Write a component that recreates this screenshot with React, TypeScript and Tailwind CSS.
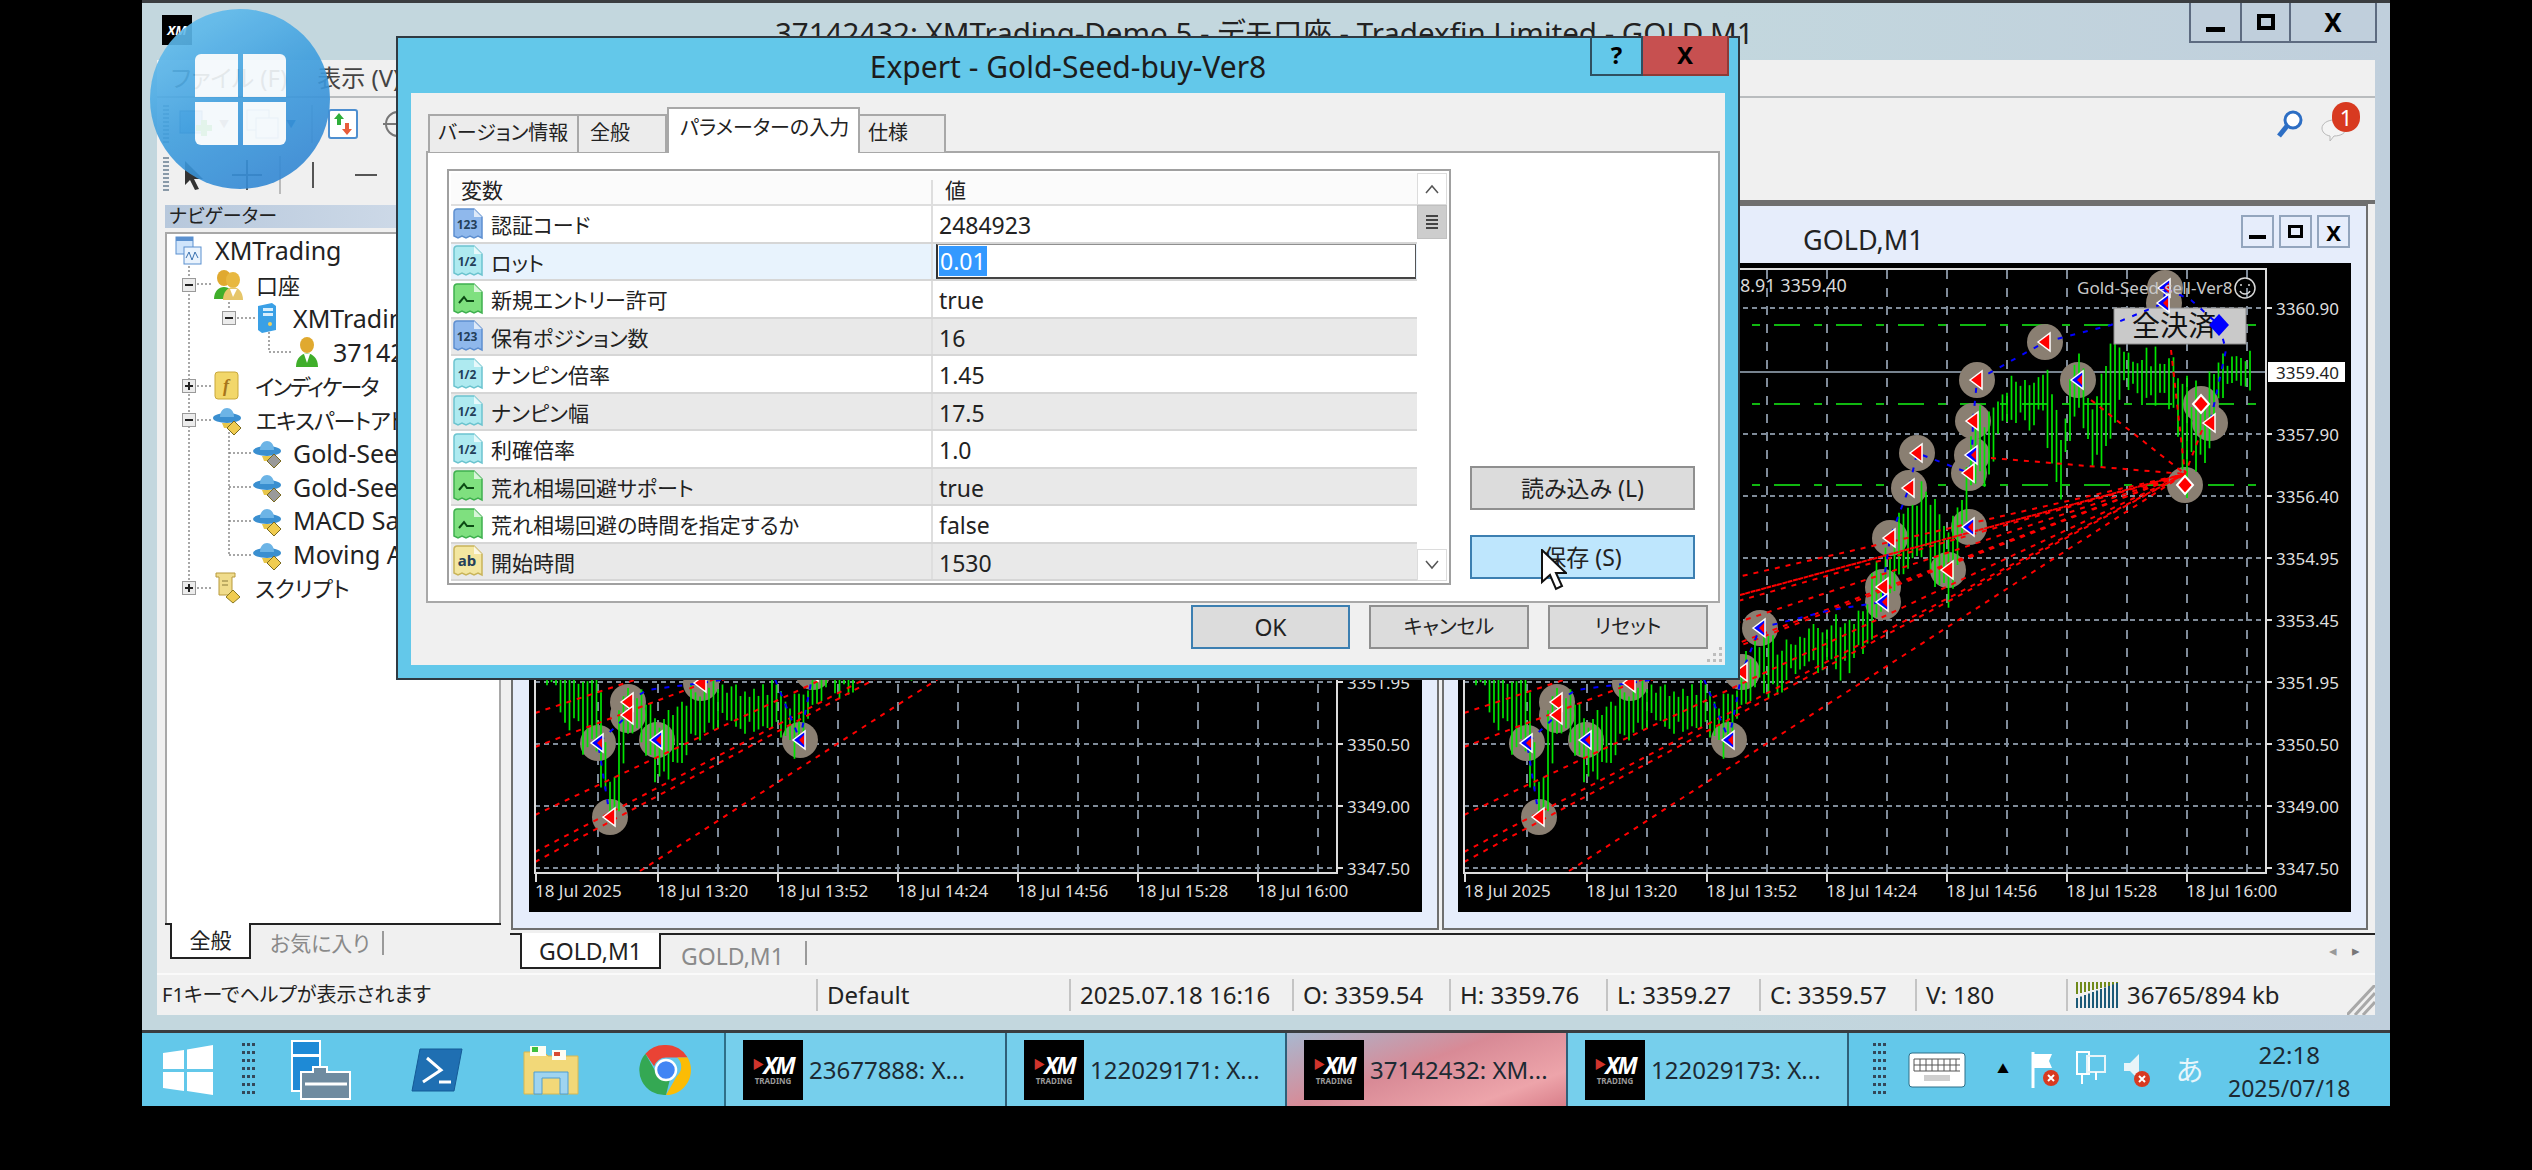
import React from 'react';

// ---- chart data, in the pixel coordinates of the right hand chart ----
const ENVELOPE: number[][] = [
  [1464,630,680],[1490,640,720],[1500,650,735],[1520,660,775],[1530,690,790],[1540,770,860],[1548,700,820],
  [1556,680,740],[1565,680,740],[1585,700,800],[1590,710,790],[1610,690,765],[1630,670,745],[1650,680,725],
  [1670,680,735],[1700,680,735],[1720,690,770],[1735,670,740],[1745,640,720],[1760,620,700],[1780,640,700],
  [1800,625,670],[1820,620,680],[1840,610,685],[1860,600,660],[1875,560,640],[1890,540,600],[1900,500,590],
  [1912,480,560],[1925,470,560],[1945,530,620],[1955,500,590],[1968,440,510],[1975,400,500],[1990,410,480],
  [2000,380,430],[2030,360,440],[2044,340,440],[2060,410,500],[2077,350,410],[2090,380,480],[2105,340,470],
  [2120,340,400],[2150,345,410],[2170,350,410],[2185,360,500],[2200,385,480],[2215,350,430],[2230,345,395],[2253,350,395],
];

function buildBars() {
  const bars: { x: number; top: number; bottom: number }[] = [];
  let seed = 7;
  const rnd = () => {
    seed = (seed * 1103515245 + 12345) % 2147483648;
    return seed / 2147483648;
  };
  for (let x = 1466; x <= 2253; x += 4.5) {
    let i = 0;
    while (i < ENVELOPE.length - 2 && ENVELOPE[i + 1][0] < x) i++;
    const [x0, t0, b0] = ENVELOPE[i];
    const [x1, t1, b1] = ENVELOPE[i + 1];
    const f = (x - x0) / (x1 - x0);
    const t = t0 + (t1 - t0) * f;
    const b = b0 + (b1 - b0) * f;
    const r = b - t;
    bars.push({ x, top: t + rnd() * r * 0.35, bottom: b - rnd() * r * 0.35 });
  }
  return bars;
}
const BARS = buildBars();

const PRICES: [string, number][] = [
  ['3360.90', 308], ['3357.90', 434], ['3356.40', 496], ['3354.95', 558], ['3353.45', 620],
  ['3351.95', 682], ['3350.50', 744], ['3349.00', 806], ['3347.50', 868],
];
const TIMES: [string, number][] = [
  ['18 Jul 2025', 1464], ['18 Jul 13:20', 1586], ['18 Jul 13:52', 1706], ['18 Jul 14:24', 1826],
  ['18 Jul 14:56', 1946], ['18 Jul 15:28', 2066], ['18 Jul 16:00', 2186],
];
const GRID_X = [1526, 1586, 1646, 1706, 1766, 1826, 1886, 1946, 2006, 2066, 2126, 2186, 2246];
const FAN: [number, number][] = [
  [1463, 713], [1463, 747], [1463, 815], [1463, 852], [1463, 862], [1568, 871], [1990, 458], [2090, 400], [2170, 350], [2205, 420],
  [1463, 640], [1463, 670], [1500, 660], [1600, 640], [1650, 680],
];
const TRADES: [number, number, string][] = [
  [2164,288,'b'],[2163,303,'b'],[2044,342,'r'],[1976,380,'r'],[2077,380,'b'],[1972,421,'r'],[1916,453,'r'],[1971,455,'b'],
  [1968,473,'r'],[1908,488,'r'],[2200,404,'d'],[2209,423,'r'],[2184,485,'d'],[1968,527,'b'],[1889,538,'r'],[1947,570,'r'],
  [1882,587,'r'],[1882,602,'b'],[1759,628,'b'],[1741,672,'r'],[1556,702,'r'],[1556,715,'r'],[1526,743,'b'],[1585,740,'b'],
  [1728,740,'b'],[1538,817,'r'],[1629,683,'r'],
];
const BLUE_PATH = '1538,817 1526,743 1556,715 1556,702 1575,690 1629,683 1700,672 1728,740 1741,672 1759,628 1830,610 1882,602 1882,587 1889,538 1908,488 1916,453 1968,473 1971,455 1972,421 1976,380 2044,342 2110,325 2163,303 2164,288 2190,300 2218,325 2225,350 2209,423';

// the left chart sits under the dialog, so its upper labels are left out
function Chart({ covered }: { covered?: boolean }) {
  const mono = { fontFamily: "'Noto Sans', sans-serif" };
  return (
    <svg width="893" height="649" viewBox="1457 263 893 649" className="bg-black block shrink-0">
      {PRICES.map(([, y]) => (
        <line key={y} x1="1463" x2="2265" y1={y} y2={y} stroke="#7f8b99" strokeWidth="2" strokeDasharray="5 4" />
      ))}
      {GRID_X.map(x => (
        <line key={x} x1={x} x2={x} y1="270" y2="872" stroke="#7f8b99" strokeWidth="2" strokeDasharray="9 9" />
      ))}
      {[325, 404, 485].map(y => (
        <line key={y} x1="1463" x2="2265" y1={y} y2={y} stroke="#10b810" strokeWidth="2" strokeDasharray="26 14 8 14" />
      ))}
      <line x1="1463" x2="2265" y1="372" y2="372" stroke="#77838f" strokeWidth="2" />
      {TRADES.map(([x, y], i) => (
        <ellipse key={i} cx={x} cy={y} rx="18" ry="18" fill="#8a7f72" />
      ))}
      {BARS.map((b, i) => (
        <line key={i} x1={b.x} x2={b.x} y1={b.top} y2={b.bottom} stroke="#00e600" strokeWidth="1.7" />
      ))}
      <rect x="2113" y="308" width="132" height="36" fill="#c9c9c9" stroke="#8b8b8b" />
      {!covered && <text x="2131" y="336" fontSize="28" fill="#111" style={{ fontFamily: "'Noto Sans CJK JP', sans-serif" }}>全決済</text>}
      {FAN.map(([x, y], i) => (
        <line key={i} x1={x} y1={y} x2="2184" y2="474" stroke="#ff0000" strokeWidth="2" strokeDasharray="5 6" />
      ))}
      <polyline points={BLUE_PATH} fill="none" stroke="#0000ff" strokeWidth="2" strokeDasharray="5 8" />
      {TRADES.map(([x, y, k], i) =>
        k === 'd' ? (
          <polygon key={i} points={`${x - 8},${y} ${x},${y - 9} ${x + 8},${y} ${x},${y + 9}`} fill="#ff0000" stroke="#fff" strokeWidth="2" />
        ) : (
          <g key={i}>
            <polygon points={`${x - 7},${y} ${x + 5},${y - 9} ${x + 5},${y + 9}`} fill={k === 'b' ? '#0000ff' : '#ff0000'} stroke="#fff" strokeWidth="1.500" />
            <polygon points={`${x - 1},${y} ${x + 4},${y - 5} ${x + 4},${y + 5}`} fill="#ff0000" />
          </g>
        ),
      )}
      <polygon points="2218,314 2228,325 2218,336 2208,325" fill="#0000ff" />
      <polyline points="1463,269 2265,269 2265,873 1463,873 1463,269" fill="none" stroke="#dcdcdc" strokeWidth="2" />
      <g fill="#dedede" fontSize="17" style={mono}>
        {!covered && <text x="1708" y="292" fontSize="18" fill="#d8d8d8">3358.91 3359.40</text>}
        {!covered && <text x="2076" y="294" fontSize="17" fill="#c8c8c8">Gold-Seed-sell-Ver8</text>}
        {PRICES.filter(([, y]) => !covered || y > 680).map(([p, y]) => (
          <g key={p}>
            <line x1="2265" x2="2271" y1={y} y2={y} stroke="#dcdcdc" strokeWidth="2" />
            <text x="2275" y={y + 7}>{p}</text>
          </g>
        ))}
        {TIMES.map(([t, x]) => (
          <g key={t}>
            <line x1={x} x2={x} y1="873" y2="882" stroke="#dcdcdc" strokeWidth="2" />
            <text x={x - 1} y="897">{t}</text>
          </g>
        ))}
      </g>
      <g fill="none" stroke="#d8d8d8" strokeWidth="1.5">
        <circle cx="2244" cy="288" r="10" />
        <path d="M2239 291c2 4 8 4 10 0" />
        <path d="M2240 284v2M2248 284v2" />
      </g>
      {!covered && <rect x="2267" y="362" width="77" height="20" fill="#fff" />}
      {!covered && <text x="2275" y="379" fontSize="17" fill="#222" style={mono}>3359.40</text>}
    </svg>
  );
}

// ---- small drawings ----
function XmLogo({ className }: { className: string }) {
  return (
    <div className={'bg-black flex flex-col items-center justify-center shrink-0 leading-none ' + className}>
      <div className="flex items-center text-white font-bold italic text-[23px] leading-[22px] tracking-[-2px]">
        <span className="text-[#d0342c] text-[12px] not-italic mr-[1px]">&#x25B6;</span>XM
      </div>
      <div className="text-[#9a9a9a] text-[8px] leading-[9px] font-bold">TRADING</div>
    </div>
  );
}

const ICON_COLORS: Record<string, [string, string, string]> = {
  int: ['#8fb8ec', '#5e8fd0', '123'],
  dbl: ['#aeeaf0', '#6cc4cf', '1/2'],
  str: ['#f3e6a0', '#c9b45a', 'ab'],
  bool: ['#7fe07f', '#3fb04f', ''],
};

function TypeIcon({ kind }: { kind: string }) {
  const [fill, edge, label] = ICON_COLORS[kind];
  return (
    <svg width="30" height="32" viewBox="0 0 30 32" className="shrink-0">
      <path d="M1 4a3 3 0 0 1 3-3h17l8 8v21l-4-2-4 2-4-2-4 2-4-2-4 2-4-2z" fill={fill} stroke={edge} strokeWidth="1.5" />
      <path d="M21 1v8h8" fill="#fff" opacity=".7" />
      {kind === 'bool' ? (
        <path d="M6 20l5-6 3 4h7" fill="none" stroke="#0c4a14" strokeWidth="2" />
      ) : (
        <text x="14" y="21" textAnchor="middle" fontSize={kind === 'str' ? 15 : 12} fontWeight="700" fill="#24405a" style={{ fontFamily: "'Noto Sans', sans-serif" }}>{label}</text>
      )}
    </svg>
  );
}

function Expander({ open }: { open: boolean }) {
  return (
    <span className="w-[14px] h-[14px] border border-[#9a9a9a] bg-[#ececec] flex items-center justify-center relative shrink-0">
      <span className="w-[8px] h-[2px] bg-[#222]" />
      {!open && <span className="absolute w-[2px] h-[8px] bg-[#222]" />}
    </span>
  );
}

function HatIcon({ gem }: { gem: string }) {
  return (
    <svg width="30" height="30" viewBox="0 0 30 30" className="shrink-0">
      <ellipse cx="14" cy="13" rx="14" ry="5" fill="#3a8fd0" />
      <path d="M7 12c0-12 14-12 14 0z" fill="#6cb4e6" />
      <path d="M9 18h9l-2 5H11z" fill="#e8c64a" />
      <path d="M21 16l7 7-7 7-7-7z" fill={gem} stroke="#7a6a20" />
    </svg>
  );
}

function TreeIcon({ kind }: { kind: string }) {
  if (kind === 'chart')
    return (
      <svg width="27" height="30" viewBox="0 0 27 30">
        <rect x="1" y="1" width="17" height="17" fill="#cfe4fb" stroke="#5a90cf" />
        <rect x="1" y="1" width="17" height="4" fill="#5a90cf" />
        <rect x="9" y="11" width="17" height="17" fill="#eaf3fd" stroke="#5a90cf" />
        <path d="M11 22l3-6 3 8 3-8 3 6" fill="none" stroke="#3a70af" />
      </svg>
    );
  if (kind === 'users')
    return (
      <svg width="31" height="32" viewBox="0 0 31 32">
        <ellipse cx="11" cy="9" rx="7" ry="8" fill="#e0a92f" />
        <path d="M1 30c0-16 20-16 20 0z" fill="#3fae2a" />
        <ellipse cx="20" cy="11" rx="7" ry="8" fill="#e8b840" />
        <path d="M10 31c0-17 20-17 20 0z" fill="#e6c66a" />
        <path d="M17 20l3 8 4-8z" fill="#fff" />
      </svg>
    );
  if (kind === 'server')
    return (
      <svg width="20" height="32" viewBox="0 0 20 32">
        <path d="M1 4l14-3 4 3v24l-14 3-4-3z" fill="#3aa0e6" />
        <rect x="6" y="6" width="10" height="3" fill="#d8eefc" />
        <rect x="6" y="11" width="10" height="3" fill="#d8eefc" />
        <circle cx="13" cy="22" r="2" fill="#f0d060" />
      </svg>
    );
  if (kind === 'func')
    return (
      <svg width="27" height="30" viewBox="0 0 27 30">
        <rect x="2" y="1" width="23" height="27" rx="3" fill="#f2d76a" stroke="#c9a83a" />
        <text x="13" y="21" textAnchor="middle" fontSize="18" fontStyle="italic" fontWeight="700" fill="#a8751a" style={{ fontFamily: "'Liberation Serif', serif" }}>f</text>
      </svg>
    );
  if (kind === 'script')
    return (
      <svg width="30" height="32" viewBox="0 0 30 32">
        <path d="M3 1h19v4h-3v18H6V5H3z" fill="#f0dc8c" stroke="#b89a3c" />
        <path d="M9 9h6M9 13h6" stroke="#8a7a3a" />
        <path d="M20 18l7 7-7 6-7-6z" fill="#f0cc50" stroke="#8a7a20" />
      </svg>
    );
  return (
    <svg width="24" height="32" viewBox="0 0 24 32">
      <ellipse cx="12" cy="9" rx="7" ry="8" fill="#e0a92f" />
      <path d="M1 31c0-18 22-18 22 0z" fill="#3fae2a" />
      <path d="M9 18l3 9 3-9z" fill="#fff" />
    </svg>
  );
}

const TREE: { pad: string; exp?: 'open' | 'closed'; icon: React.ReactNode; iconGap?: string; text: string; textClass: string }[] = [
  { pad: 'pl-[8px]', icon: <TreeIcon kind="chart" />, text: 'XMTrading', textClass: 'ml-[13px] text-[25px]' },
  { pad: 'pl-[15px]', exp: 'open', iconGap: 'ml-[17px]', icon: <TreeIcon kind="users" />, text: '口座', textClass: 'ml-[12px]' },
  { pad: 'pl-[55px]', exp: 'open', iconGap: 'ml-[21px]', icon: <TreeIcon kind="server" />, text: 'XMTrading-Demo 5', textClass: 'ml-[16px] text-[25px]' },
  { pad: 'pl-[128px]', icon: <TreeIcon kind="user" />, text: '37142432', textClass: 'ml-[14px] text-[25px]' },
  { pad: 'pl-[15px]', exp: 'closed', iconGap: 'ml-[17px]', icon: <TreeIcon kind="func" />, text: 'インディケータ', textClass: 'ml-[15px] tracking-[-2px]' },
  { pad: 'pl-[15px]', exp: 'open', iconGap: 'ml-[17px]', icon: <HatIcon gem="#f0cc50" />, text: 'エキスパートアドバイザ', textClass: 'ml-[13px] tracking-[-1px]' },
  { pad: 'pl-[86px]', icon: <HatIcon gem="#9a9a9a" />, text: 'Gold-Seed-buy-Ver8', textClass: 'ml-[10px] text-[25px]' },
  { pad: 'pl-[86px]', icon: <HatIcon gem="#9a9a9a" />, text: 'Gold-Seed-sell-Ver8', textClass: 'ml-[10px] text-[25px]' },
  { pad: 'pl-[86px]', icon: <HatIcon gem="#f0cc50" />, text: 'MACD Sample', textClass: 'ml-[10px] text-[25px]' },
  { pad: 'pl-[86px]', icon: <HatIcon gem="#f0cc50" />, text: 'Moving Average', textClass: 'ml-[10px] text-[25px]' },
  { pad: 'pl-[15px]', exp: 'closed', iconGap: 'ml-[17px]', icon: <TreeIcon kind="script" />, text: 'スクリプト', textClass: 'ml-[12px]' },
];

const PARAMS: [string, string, string][] = [
  ['int', '認証コード', '2484923'],
  ['dbl', 'ロット', '0.01'],
  ['bool', '新規エントリー許可', 'true'],
  ['int', '保有ポジション数', '16'],
  ['dbl', 'ナンピン倍率', '1.45'],
  ['dbl', 'ナンピン幅', '17.5'],
  ['dbl', '利確倍率', '1.0'],
  ['bool', '荒れ相場回避サポート', 'true'],
  ['bool', '荒れ相場回避の時間を指定するか', 'false'],
  ['str', '開始時間', '1530'],
];

const ROW_BG = ['bg-white', 'bg-[#e8f3fd]', 'bg-white', 'bg-[#e9e9e9]', 'bg-white', 'bg-[#e9e9e9]', 'bg-white', 'bg-[#e9e9e9]', 'bg-white', 'bg-[#e9e9e9]'];

const STATUS = [
  { w: 'w-[654px] text-[20px]', text: 'F1キーでヘルプが表示されます' },
  { w: 'w-[253px]', text: 'Default' },
  { w: 'w-[223px]', text: '2025.07.18 16:16' },
  { w: 'w-[157px]', text: 'O: 3359.54' },
  { w: 'w-[157px]', text: 'H: 3359.76' },
  { w: 'w-[153px]', text: 'L: 3359.27' },
  { w: 'w-[156px]', text: 'C: 3359.57' },
  { w: 'w-[151px]', text: 'V: 180' },
];

const TASKS = [
  { w: 'w-[281px]', bg: 'bg-[#76cfec]', text: '23677888: X...' },
  { w: 'w-[280px]', bg: 'bg-[#76cfec]', text: '122029171: X...' },
  { w: 'w-[281px]', bg: 'bg-[linear-gradient(160deg,#a8b8d0_0%,#d88a96_45%,#eda4aa_80%,#d97f8a_100%)]', text: '37142432: XM...' },
  { w: 'w-[281px]', bg: 'bg-[#76cfec]', text: '122029173: X...' },
];

function Grip({ className }: { className: string }) {
  return (
    <svg width="14" height="54" viewBox="0 0 14 54" className={'shrink-0 ' + className}>
      {[0, 8, 16, 24, 32, 40, 48].map(y => (
        <g key={y} fill="#33485a">
          <rect x="0" y={y} width="3" height="3" />
          <rect x="5" y={y} width="3" height="3" />
          <rect x="10" y={y} width="3" height="3" />
        </g>
      ))}
    </svg>
  );
}

function ChartWindow({ pad, covered }: { pad: string; covered?: boolean }) {
  return (
    <div className={'h-[726px] bg-[#e6edfb] border-2 border-[#6f6f6f] flex flex-col ' + pad}>
      <div className="h-[57px] flex items-center shrink-0 relative">
        {!covered && <span className="ml-[345px] mt-[10px] text-[27px] text-[#222]">GOLD,M1</span>}
        {!covered && (
          <div className="ml-auto mr-[16px] flex gap-[5px] mt-[-6px]">
            <span className="w-[33px] h-[33px] border-2 border-[#93a5bd] flex items-end justify-center pb-[7px]"><span className="w-[17px] h-[4px] bg-black" /></span>
            <span className="w-[33px] h-[33px] border-2 border-[#93a5bd] flex items-center justify-center"><span className="w-[15px] h-[13px] border-[3px] border-black" /></span>
            <span className="w-[33px] h-[33px] border-2 border-[#93a5bd] flex items-center justify-center text-[22px] font-bold text-black">X</span>
          </div>
        )}
      </div>
      <Chart covered={covered} />
    </div>
  );
}

function DlgButton({ label, className }: { label: string; className: string }) {
  return <div className={'flex items-center justify-center h-[44px] border-2 text-[#222] ' + className}>{label}</div>;
}

function ParamDialog() {
  const tab = 'h-[38px] mb-[-1px] bg-[#ececec] border-[#a8a8a8] flex items-center pb-[2px] ';
  return (
    <div className="absolute left-[396px] top-[36px] w-[1344px] h-[644px] bg-[#63c8ea] border-2 border-[#2f3a42] flex flex-col">
      <div className="h-[55px] shrink-0 flex items-start relative">
        <div className="flex-1 text-center text-[30px] text-[#1c1c1c] pt-[14px]">Expert - Gold-Seed-buy-Ver8</div>
        <div className="absolute right-[9px] top-[-2px] flex h-[40px]">
          <span className="w-[53px] border-2 border-t-0 border-[#2f4f60] flex items-center justify-center font-bold text-[24px] text-black">?</span>
          <span className="w-[86px] border-2 border-t-0 border-l-0 border-[#8e3a36] bg-[#c75050] flex items-center justify-center font-bold text-[24px] text-black">X</span>
        </div>
      </div>
      <div className="mx-[13px] h-[572px] bg-[#f0f0f0] pt-[16px] relative">
        {/* tabs */}
        <div className="flex items-end h-[42px] pl-[17px] text-[20px] text-[#222] relative z-10">
          <div className={tab + 'w-[151px] border-2 border-b-0 pl-[8px]'}>バージョン情報</div>
          <div className={tab + 'w-[88px] border-t-2 border-r-2 pl-[11px]'}>全般</div>
          <div className="w-[193px] h-[46px] mb-[-2px] bg-white border-2 border-b-0 border-[#a8a8a8] flex items-center pl-[11px] pb-[6px]">パラメーターの入力</div>
          <div className={tab + 'w-[86px] border-2 border-l-0 border-b-0 pl-[8px]'}>仕様</div>
        </div>
        <div className="ml-[15px] w-[1294px] h-[452px] bg-white border-2 border-[#a8a8a8] flex pl-[19px] pt-[16px]">
          {/* parameter table */}
          <div className="w-[1004px] h-[416px] border-2 border-[#a0a0a0] p-[2px] flex">
            <div className="w-[966px] flex flex-col shrink-0">
              <div className="h-[33px] flex text-[21px] text-[#222] bg-[#fbfbfb] border-b-2 border-[#dedede] shrink-0 pt-[7px]">
                <div className="w-[482px] pl-[10px] border-r-2 border-[#dedede]">変数</div>
                <div className="pl-[12px]">値</div>
              </div>
              {PARAMS.map(([kind, name, value], i) => (
                <div key={name} className={'h-[37.5px] flex items-center border-b-2 border-[#d6d6d6] text-[#222] shrink-0 ' + ROW_BG[i]}>
                  <div className="w-[482px] h-full flex items-center pl-[2px] gap-[8px] border-r-2 border-[#dedede] shrink-0 text-[21px]">
                    <TypeIcon kind={kind} />
                    <span className="pt-[4px]">{name}</span>
                  </div>
                  {i === 1 ? (
                    <div className="ml-[3px] w-[480px] h-[35px] bg-white border border-t-[#8f8f8f] border-l-2 border-l-[#333] border-b-2 border-b-[#444] border-r-[#555] flex items-center pl-[1px] text-[23px]">
                      <span className="bg-[#3399ff] text-white px-[1px] leading-[30px]">{value}</span>
                    </div>
                  ) : (
                    <div className="pl-[6px] pt-[4px] text-[23px]">{value}</div>
                  )}
                </div>
              ))}
            </div>
            <div className="flex-1 flex flex-col">
              <div className="h-[32px] bg-white border border-[#dcdcdc] flex items-center justify-center text-[#555]">
                <svg width="14" height="10" viewBox="0 0 14 10"><path d="M1 9l6-7 6 7" fill="none" stroke="#555" strokeWidth="1.5" /></svg>
              </div>
              <div className="h-[34px] bg-[#cdcdcd] border border-[#c0c0c0] flex flex-col items-center justify-center gap-[2px]">
                <span className="w-[12px] h-[2px] bg-[#444]" />
                <span className="w-[12px] h-[2px] bg-[#444]" />
                <span className="w-[12px] h-[2px] bg-[#444]" />
                <span className="w-[12px] h-[2px] bg-[#444]" />
              </div>
              <div className="flex-1 bg-white" />
              <div className="h-[32px] bg-white border border-[#dcdcdc] flex items-center justify-center">
                <svg width="14" height="10" viewBox="0 0 14 10"><path d="M1 1l6 7 6-7" fill="none" stroke="#555" strokeWidth="1.5" /></svg>
              </div>
            </div>
          </div>
          <div className="ml-[19px] w-[225px] pt-[297px] flex flex-col gap-[25px] text-[23px]">
            <DlgButton label="読み込み (L)" className="bg-[#dcdcdc] border-[#8f8f8f]" />
            <DlgButton label="保存 (S)" className="bg-[#bee6fd] border-[#3c7fb1]" />
          </div>
        </div>
        <div className="flex justify-end gap-[19px] pr-[17px] mt-[2px] text-[20px]">
          <DlgButton label="OK" className="w-[159px] bg-[#dcdcdc] border-[#3c7fb1] text-[23px]" />
          <DlgButton label="キャンセル" className="w-[160px] bg-[#dcdcdc] border-[#8f8f8f]" />
          <DlgButton label="リセット" className="w-[160px] bg-[#dcdcdc] border-[#8f8f8f]" />
        </div>
        <svg width="18" height="18" viewBox="0 0 18 18" className="absolute right-[2px] bottom-[2px]">
          <g fill="#bdbdbd"><rect x="14" y="2" width="3" height="3" /><rect x="14" y="8" width="3" height="3" /><rect x="14" y="14" width="3" height="3" /><rect x="8" y="8" width="3" height="3" /><rect x="8" y="14" width="3" height="3" /><rect x="2" y="14" width="3" height="3" /></g>
        </svg>
      </div>
    </div>
  );
}

export default function App() {
  return (
    <div className="relative w-[2532px] h-[1170px] bg-black overflow-hidden text-[22px] text-[#222] font-['Noto_Sans','Noto_Sans_CJK_JP',sans-serif] [font-feature-settings:'palt'] leading-none">
      <div className="ml-[142px] w-[2248px] h-[1106px] flex flex-col">
        {/* main terminal window */}
        <div className="h-[1033px] flex flex-col bg-[linear-gradient(90deg,#c3d7de_0%,#c3d7de_70%,#c0cfdc_100%)] border-t-[3px] border-b-[3px] border-[#3a3d40]">
          <div className="h-[57px] shrink-0 flex relative">
            <div className="ml-[20px] mt-[12px] w-[30px] h-[30px] bg-black flex items-center justify-center shrink-0 text-white text-[13px] font-bold italic">XM</div>
            <div className="absolute left-[633px] top-[15px] text-[29.5px] text-[#222] whitespace-nowrap">37142432: XMTrading-Demo 5 - デモ口座 - Tradexfin Limited - GOLD,M1</div>
            <div className="absolute left-[2047px] top-0 flex h-[40px] border-2 border-t-0 border-[#5d6b80] bg-[#c0cfdc]">
              <span className="w-[51px] flex items-end justify-center pb-[9px] border-r-2 border-[#5d6b80]"><span className="w-[19px] h-[5px] bg-black" /></span>
              <span className="w-[49px] flex items-center justify-center border-r-2 border-[#5d6b80]"><span className="w-[18px] h-[16px] border-[4px] border-black" /></span>
              <span className="w-[84px] flex items-center justify-center font-bold text-[26px] text-black">X</span>
            </div>
          </div>
          <div className="mx-[15px] flex-1 flex flex-col bg-[#f0f0f0] mb-[15px] min-h-0">
            {/* menu */}
            <div className="h-[38px] shrink-0 flex items-center gap-[30px] pl-[14px] border-b-2 border-[#b9bcbe] text-[#444] text-[24px]">
              <span>ファイル (F)</span>
              <span>表示 (V)</span>
            </div>
            {/* toolbars */}
            <div className="h-[52px] shrink-0 flex items-center pl-[6px]">
              <svg width="6" height="40" viewBox="0 0 6 40"><path d="M0 2h6M0 6h6M0 10h6M0 14h6M0 18h6M0 22h6M0 26h6M0 30h6M0 34h6M0 38h6" stroke="#8a9aa8" strokeWidth="2" /></svg>
              <svg width="34" height="28" viewBox="0 0 34 28" className="ml-[10px]"><rect x="1" y="1" width="22" height="22" fill="#8fc0ee" stroke="#4e7fb8" /><path d="M25 10v16M17 18h16" stroke="#43c243" strokeWidth="6" /></svg>
              <span className="ml-[6px] text-[10px] text-[#888]">&#x25BC;</span>
              <svg width="34" height="30" viewBox="0 0 34 30" className="ml-[17px]"><rect x="1" y="1" width="22" height="20" fill="#e8f2fb" stroke="#7ea4c8" /><rect x="10" y="9" width="22" height="20" fill="#f0f6fb" stroke="#7ea4c8" /></svg>
              <span className="ml-[6px] text-[10px] text-[#2d6ca8]">&#x25BC;</span>
              <span className="ml-[15px] w-[2px] h-[38px] bg-[#c8c8c8]" />
              <svg width="30" height="30" viewBox="0 0 30 30" className="ml-[15px]"><rect x="1" y="1" width="28" height="28" rx="2" fill="#fff" stroke="#4e8fd0" strokeWidth="2" /><path d="M11 4l5 6h-3v6H9v-6H6z" fill="#2fae3a" /><path d="M19 26l-5-6h3v-6h4v6h3z" fill="#e85c3a" /></svg>
              <svg width="14" height="30" viewBox="0 0 14 30" className="ml-[25px]"><circle cx="15" cy="15" r="12" fill="none" stroke="#777" strokeWidth="2" /><path d="M0 15h14" stroke="#777" strokeWidth="2" /></svg>
              <svg width="28" height="30" viewBox="0 0 28 30" className="ml-auto"><circle cx="17" cy="11" r="8" fill="#fff" stroke="#2d6ec4" strokeWidth="3" /><path d="M11 17L3 27" stroke="#2d6ec4" strokeWidth="5" /></svg>
              <div className="relative ml-[17px] mr-[14px] w-[40px] h-[36px]">
                <svg width="26" height="24" viewBox="0 0 26 24" className="absolute left-0 bottom-0"><path d="M13 2c7 0 12 3 12 8s-5 8-12 8l-4 5v-5C4 17 1 14 1 10s5-8 12-8z" fill="#f4f4f4" stroke="#b8b8b8" /></svg>
                <span className="absolute left-[11px] top-[-4px] w-[28px] h-[30px] rounded-full bg-[#d83a20] text-white flex items-center justify-center text-[22px]">1</span>
              </div>
            </div>
            <div className="h-[50px] shrink-0 flex items-center pl-[6px] text-[#444]">
              <svg width="6" height="38" viewBox="0 0 6 38"><path d="M0 2h6M0 6h6M0 10h6M0 14h6M0 18h6M0 22h6M0 26h6M0 30h6M0 34h6" stroke="#8a9aa8" strokeWidth="2" /></svg>
              <svg width="22" height="30" viewBox="0 0 22 30" className="ml-[14px]"><path d="M2 1l18 18h-9l5 10-4 1-5-10-5 5z" fill="#333" /></svg>
              <svg width="30" height="30" viewBox="0 0 30 30" className="ml-[27px]"><path d="M15 0v30M0 15h30" stroke="#555" strokeWidth="2" /></svg>
              <span className="ml-[17px] w-[2px] h-[38px] bg-[#bbb]" />
              <span className="ml-[31px] w-[2px] h-[26px] bg-[#555]" />
              <span className="ml-[41px] w-[22px] h-[2px] bg-[#555]" />
            </div>
            {/* navigator + chart area */}
            <div className="flex-1 flex min-h-0">
              <div className="w-[353px] pl-[8px] shrink-0 flex flex-col">
                <div className="mt-[5px] h-[23px] w-[337px] bg-[linear-gradient(90deg,#b7c8dc,#d6e0ec)] pl-[4px] flex items-center text-[19px] text-[#222]">ナビゲーター</div>
                <div className="mt-[4px] w-[336px] h-[691px] relative bg-white border-2 border-b-0 border-[#a8a8a8]">
                  <svg width="334" height="689" viewBox="168 234 334 689" className="absolute left-0 top-0">
                    <path d="M190 262V580M198 284h16M198 386h16M198 420h16M198 588h16M230 298v12M238 318h18M270 332v20h24M230 432v123M230 453h22M230 487h22M230 521h22M230 555h22" fill="none" stroke="#8a8a8a" strokeWidth="1.5" strokeDasharray="2 2" />
                  </svg>
                  {TREE.map(row => (
                    <div key={row.text} className={'relative h-[33.75px] flex items-center whitespace-nowrap ' + row.pad}>
                      {row.exp && <Expander open={row.exp === 'open'} />}
                      <span className={'flex items-center ' + (row.iconGap ?? '')}>{row.icon}</span>
                      <span className={row.textClass}>{row.text}</span>
                    </div>
                  ))}
                </div>
                <div className="w-[336px] h-[37px] bg-[#f0f0f0] border-t-2 border-[#222] flex items-start text-[21px]">
                  <div className="ml-[5px] w-[81px] h-[36px] mt-[-2px] bg-white border-2 border-[#222] border-t-0 flex items-center justify-center">全般</div>
                  <div className="ml-[19px] mt-[8px] text-[#8a8a8a]">お気に入り</div>
                  <span className="ml-[12px] mt-[6px] w-[2px] h-[24px] bg-[#9a9a9a]" />
                </div>
              </div>
              <div className="flex-1 flex flex-col min-w-0">
                <div className="h-[4px] bg-[#6f6f6f] shrink-0" />
                <div className="h-[726px] flex gap-[3px] pl-[1px] shrink-0">
                  <div className="w-[928px]"><ChartWindow pad="pl-[16px]" covered /></div>
                  <div className="w-[926px]"><ChartWindow pad="pl-[14px]" /></div>
                </div>
                <div className="mt-[3px] h-[37px] border-t-2 border-[#222] flex items-start text-[23px] shrink-0">
                  <div className="ml-[10px] w-[141px] h-[36px] mt-[-2px] bg-white border-2 border-t-0 border-[#222] flex items-center justify-center pt-[3px]">GOLD,M1</div>
                  <div className="ml-[20px] mt-[10px] text-[#8a8a8a]">GOLD,M1</div>
                  <span className="ml-[21px] mt-[6px] w-[2px] h-[24px] bg-[#9a9a9a]" />
                  <span className="ml-auto mr-[15px] mt-[8px] text-[15px] text-[#999]">&#x25C2;</span>
                  <span className="mr-[15px] mt-[8px] text-[15px] text-[#777]">&#x25B8;</span>
                </div>
              </div>
            </div>
            {/* status bar */}
            <div className="h-[42px] shrink-0 flex items-center border-t-2 border-[#fafafa] pl-[5px] text-[24px] text-[#222] relative">
              {STATUS.map((s, i) => (
                <div key={s.text} className={'h-[32px] flex items-center shrink-0 whitespace-nowrap pr-[6px] ' + s.w + (i > 0 ? ' border-l-2 border-[#c4c4c4] pl-[9px]' : '')}>{s.text}</div>
              ))}
              <div className="h-[32px] flex items-center gap-[7px] border-l-2 border-[#c4c4c4] pl-[8px] shrink-0">
                <svg width="44" height="26" viewBox="0 0 44 26">
                  {[0, 4, 8, 12, 16, 20, 24, 28, 32, 36, 40].map((x, i) => (
                    <g key={x}>
                      <rect x={x} y="0" width="2" height={Math.max(0, 12 - i)} fill="#6f8a1a" />
                      <rect x={x} y={Math.max(0, 16 - i * 1.5)} width="2" height={26 - Math.max(0, 16 - i * 1.5)} fill="#1c5a78" />
                    </g>
                  ))}
                </svg>
                36765/894 kb
              </div>
              <svg width="28" height="30" viewBox="0 0 28 30" className="absolute right-0 bottom-0"><path d="M0 30L28 0M8 30L28 8M16 30L28 17" stroke="#a8a8a8" strokeWidth="3" /></svg>
            </div>
          </div>
        </div>
        {/* taskbar */}
        <div className="h-[73px] bg-[#63c8ea] flex items-center text-[24px] text-[#1c2a33]">
          <svg width="50" height="50" viewBox="0 0 50 50" className="ml-[21px] shrink-0"><path d="M0 8l21-3v19H0zM24 4.500L50 0v24H24zM0 27h21v19L0 43zM24 27h26v23l-26-4z" fill="#fff" /></svg>
          <Grip className="ml-[29px]" />
          <svg width="60" height="60" viewBox="0 0 60 60" className="ml-[35px] shrink-0">
            <rect x="1" y="1" width="28" height="50" fill="#1e8ad6" stroke="#fff" strokeWidth="2" />
            <rect x="1" y="14" width="28" height="3" fill="#fff" />
            <path d="M10 32h12v-5h14v5h23v27H10z" fill="#6f8ba0" stroke="#fff" strokeWidth="2" />
            <path d="M14 44h42" stroke="#fff" strokeWidth="3" />
          </svg>
          <svg width="52" height="44" viewBox="0 0 52 44" className="ml-[60px] shrink-0">
            <path d="M9 1h42l-8 42H1z" fill="#1f6fb2" stroke="#155a96" />
            <path d="M16 10l14 12-18 12M28 34h12" fill="none" stroke="#fff" strokeWidth="3" />
          </svg>
          <svg width="58" height="52" viewBox="0 0 58 52" className="ml-[59px] shrink-0">
            <path d="M2 8h20l4 4h30v38H2z" fill="#f2d878" stroke="#d8b850" />
            <rect x="8" y="2" width="16" height="10" fill="#fdfdf2" />
            <rect x="10" y="3" width="6" height="5" fill="#3ec03e" />
            <rect x="30" y="6" width="14" height="10" fill="#fdfdf2" />
            <rect x="32" y="8" width="6" height="4" fill="#d84a30" />
            <path d="M12 50V28h34v22h-8V34H20v16z" fill="#9fd4f0" stroke="#4e9ed0" />
          </svg>
          <svg width="60" height="60" viewBox="0 0 48 48" className="ml-[56px] shrink-0">
            <path d="M24 4a20 20 0 0 1 17.300 10H24a10 10 0 0 0-9.500 7L7.500 11A20 20 0 0 1 24 4z" fill="#ea4335" />
            <path d="M41.300 14A20 20 0 0 1 24 44l8.600-15a10 10 0 0 0 .4-15z" fill="#fbbc05" />
            <path d="M24 44A20 20 0 0 1 7.500 11l8.600 15a10 10 0 0 0 11 5.500z" fill="#34a853" />
            <circle cx="24" cy="24" r="8" fill="#4285f4" stroke="#fff" strokeWidth="2" />
          </svg>
          <div className="ml-[28px] w-[2px] h-full bg-[#2f6f88] shrink-0" />
          {TASKS.map(t => (
            <div key={t.text} className={'h-full flex items-center pl-[17px] gap-[6px] border-r-2 border-[#2f5f78] shrink-0 whitespace-nowrap ' + t.w + ' ' + t.bg}>
              <XmLogo className="w-[60px] h-[60px]" />
              {t.text}
            </div>
          ))}
          <Grip className="ml-[24px]" />
          <svg width="58" height="36" viewBox="0 0 58 36" className="ml-[21px] shrink-0">
            <rect x="1" y="1" width="56" height="34" rx="3" fill="#fff" stroke="#2f6f88" />
            <path d="M6 7h46M6 13h46M6 19h46M6 7v12M12 7v12M18 7v12M24 7v12M30 7v12M36 7v12M42 7v12M48 7v12" stroke="#555" />
            <rect x="16" y="23" width="26" height="6" fill="#cfcfcf" />
          </svg>
          <span className="ml-[31px] text-[12px] text-black">&#x25B2;</span>
          <svg width="28" height="40" viewBox="0 0 28 40" className="ml-[22px] shrink-0">
            <path d="M2 2v36" stroke="#fff" strokeWidth="3" /><path d="M3 4h18l-3 7 3 7H3z" fill="#fff" />
            <circle cx="20" cy="28" r="8" fill="#d83a20" /><path d="M17 25l6 6M23 25l-6 6" stroke="#fff" strokeWidth="2" />
          </svg>
          <svg width="30" height="40" viewBox="0 0 30 40" className="ml-[17px] shrink-0">
            <rect x="1" y="2" width="12" height="22" fill="none" stroke="#fff" strokeWidth="2" /><rect x="11" y="6" width="18" height="16" fill="none" stroke="#e8f4f8" strokeWidth="2" /><path d="M6 24v10M20 22v8" stroke="#fff" strokeWidth="2" />
          </svg>
          <svg width="28" height="40" viewBox="0 0 28 40" className="ml-[17px] shrink-0">
            <path d="M1 13h6l9-9v26l-9-9H1z" fill="#e8f4f8" />
            <circle cx="19" cy="29" r="8" fill="#d83a20" /><path d="M16 26l6 6M22 26l-6 6" stroke="#fff" strokeWidth="2" />
          </svg>
          <span className="ml-[25px] text-[28px] text-[#e8f6fb]">あ</span>
          <div className="ml-[21px] pt-[4px] w-[130px] flex flex-col items-center gap-[10px] shrink-0 text-[23px]">
            <span className="text-[24px]">22:18</span>
            <span>2025/07/18</span>
          </div>
        </div>
      </div>
      <ParamDialog />
      {/* start tile bubble */}
      <div className="absolute left-[150px] top-[9px] w-[180px] h-[180px] rounded-full bg-[linear-gradient(150deg,#6cc6f2_0%,#3f9ede_50%,#2f80d0_100%)] opacity-90 flex items-center justify-center">
        <div className="grid grid-cols-2 gap-[5px]">
          <span className="w-[43px] h-[43px] rounded-tl-[6px] bg-white/95" />
          <span className="w-[43px] h-[43px] rounded-tr-[6px] bg-white/95" />
          <span className="w-[43px] h-[43px] rounded-bl-[6px] bg-white/95" />
          <span className="w-[43px] h-[43px] rounded-br-[6px] bg-white/95" />
        </div>
      </div>
      {/* mouse pointer */}
      <svg width="26" height="42" viewBox="0 0 26 42" className="absolute left-[1541px] top-[549px]">
        <path d="M1 1v32l8-7 6 14 6-3-6-13h10z" fill="#fff" stroke="#111" strokeWidth="2" />
      </svg>
    </div>
  );
}
